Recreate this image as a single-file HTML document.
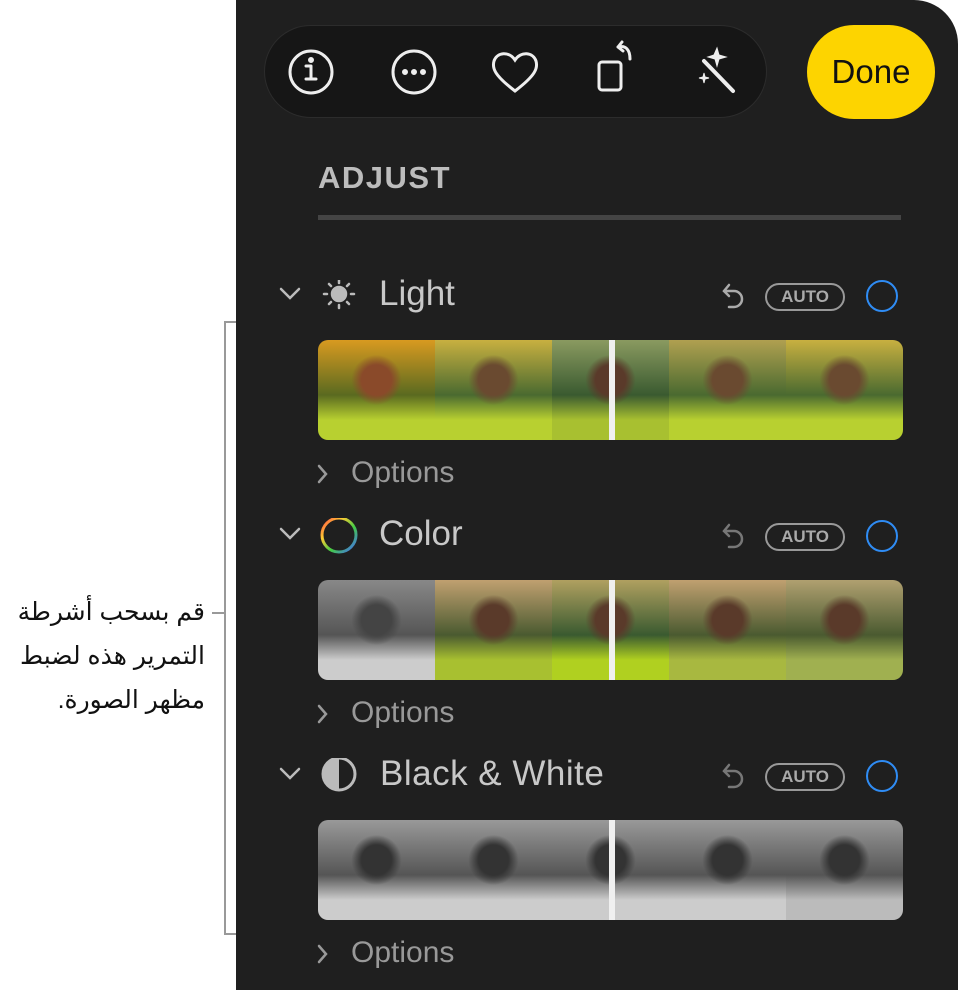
<!DOCTYPE html>
<html><head><meta charset="utf-8"><style>
body{margin:0;width:963px;height:990px;background:#fff;position:relative;overflow:hidden;font-family:"Liberation Sans",sans-serif}
.panel{position:absolute;left:236px;top:0;width:722px;height:990px;background:#1f1f1f;border-top-right-radius:44px}
.abs{position:absolute}
.bar{left:264px;top:25px;width:503px;height:93px;border-radius:47px;background:#161616;border:1px solid #2c2c2c;box-sizing:border-box}
.done{left:807px;top:25px;width:128px;height:94px;border-radius:47px;background:#fdd400;color:#111;font-size:33px;text-align:center;line-height:94px}
.adj{left:318px;top:160px;color:#bdbdbd;font-size:31px;font-weight:bold;letter-spacing:1.5px}
.rule{left:318px;top:215px;width:583px;height:5px;background:#444}
.title{color:#c8c8c8;font-size:35px}
.opt{color:#999;font-size:30px}
.auto{width:76px;height:24px;border:2px solid #999;border-radius:14px;color:#aaa;font-size:17px;font-weight:bold;text-align:center;line-height:24px}
.ring{width:32px;height:32px;border:2.5px solid #2f8cf4;border-radius:50%;box-sizing:border-box}
.strip{left:318px;width:585px;height:100px;border-radius:10px;overflow:hidden;display:flex}
.strip div{flex:1;position:relative}
.strip .sep{position:absolute;left:291px;top:0;width:6px;height:100px;background:#f0f0f0}
.ar{font-family:"Liberation Sans","Noto Sans CJK SC","DejaVu Sans",sans-serif;direction:rtl;text-align:right;font-size:25px;line-height:44px;color:#111;right:758px;top:590px;width:220px}
</style></head><body>
<div class="panel"></div>
<div class="abs bar"></div>
<svg class="abs" style="left:264px;top:25px" width="503" height="93" fill="none" stroke="#eee" stroke-width="3" stroke-linecap="round">
<circle cx="47" cy="47" r="21"/><path d="M47 41v13M42 54h10M42 41h5"/><circle cx="47" cy="35" r="1.5" fill="#eee"/>
<circle cx="150" cy="47" r="21"/><circle cx="141" cy="47" r="1.5" fill="#eee"/><circle cx="150" cy="47" r="1.5" fill="#eee"/><circle cx="159" cy="47" r="1.5" fill="#eee"/>
<path d="M251 66C230 50 228 43 230 36c3-9 15-10 21-1c6-9 18-8 21 1c2 7 0 14-21 30z"/>
<rect x="335" y="37" width="22" height="28" rx="3"/><path d="M354 22c8-2 12 3 12 12M354 22l4-5M354 22l5 4"/>
<path d="M440 36l29 30" stroke-width="4"/><path d="M450 30l3-7 2 7 7 2-7 2-2 7-2-7-7-2z" fill="#eee" stroke-width="1"/><path d="M439 52l1-4 1 4 4 1-4 1-1 4-1-4-4-1z" fill="#eee" stroke-width="1"/>
</svg>
<div class="abs done">Done</div>
<div class="abs adj">ADJUST</div>
<div class="abs rule"></div>

<!-- Light -->
<svg class="abs" style="left:278px;top:280px" width="80" height="34" fill="none" stroke="#bbb" stroke-width="2.5" stroke-linecap="round">
<path d="M3 9l9 9 9-9"/>
<circle cx="61" cy="14" r="7" fill="#bbb"/>
<path d="M61 0v3M61 25v3M46 14h3M73 14h3M51 4l2 2M69 22l2 2M51 24l2-2M69 6l2-2"/>
</svg>
<div class="abs title" style="left:379px;top:274px">Light</div>
<svg class="abs" style="left:720px;top:282px" width="28" height="30" fill="none" stroke="#aaa" stroke-width="2.5" stroke-linecap="round"><path d="M9 3L4 9l5 5M4 9h10a8 8 0 010 16h-5"/></svg>
<div class="abs auto" style="left:765px;top:283px">AUTO</div>
<div class="abs ring" style="left:866px;top:280px"></div>
<div class="abs strip" style="top:340px">
<div style="background:radial-gradient(circle at 50% 40%,#8a4a2a 18%,transparent 30%),linear-gradient(180deg,#d89a20,#5a6a20 55%,#b8d030 80%)"></div>
<div style="background:radial-gradient(circle at 50% 40%,#6a4a30 18%,transparent 30%),linear-gradient(180deg,#c8b040,#4a6a30 55%,#b8d030 80%)"></div>
<div style="background:radial-gradient(circle at 50% 40%,#5a3a2a 18%,transparent 30%),linear-gradient(180deg,#8a9a60,#3a5a30 55%,#a8c030 80%)"></div>
<div style="background:radial-gradient(circle at 50% 40%,#6a4a30 18%,transparent 30%),linear-gradient(180deg,#b0a050,#4a6a30 55%,#b8d030 80%)"></div>
<div style="background:radial-gradient(circle at 50% 40%,#6a4a30 18%,transparent 30%),linear-gradient(180deg,#c8b040,#4a6a30 55%,#b8d030 80%)"></div>
<span class="sep"></span></div>
<svg class="abs" style="left:316px;top:463px" width="14" height="22" fill="none" stroke="#999" stroke-width="2.5" stroke-linecap="round"><path d="M3 3l7 8-7 8"/></svg>
<div class="abs opt" style="left:351px;top:456px">Options</div>

<!-- Color -->
<svg class="abs" style="left:278px;top:518px" width="80" height="40" fill="none" stroke-width="3" stroke-linecap="round">
<path d="M3 11l9 9 9-9" stroke="#bbb" stroke-width="2.5"/>
<circle cx="61" cy="17" r="17" stroke="url(#g)"/>
<defs><linearGradient id="g" x1="0" y1="0" x2="1" y2="1"><stop offset="0" stop-color="#f44"/><stop offset=".3" stop-color="#fc3"/><stop offset=".6" stop-color="#4c4"/><stop offset="1" stop-color="#46f"/></linearGradient></defs>
</svg>
<div class="abs title" style="left:379px;top:514px">Color</div>
<svg class="abs" style="left:720px;top:522px" width="28" height="30" fill="none" stroke="#777" stroke-width="2.5" stroke-linecap="round"><path d="M9 3L4 9l5 5M4 9h10a8 8 0 010 16h-5"/></svg>
<div class="abs auto" style="left:765px;top:523px">AUTO</div>
<div class="abs ring" style="left:866px;top:520px"></div>
<div class="abs strip" style="top:580px">
<div style="background:radial-gradient(circle at 50% 40%,#444 18%,transparent 30%),linear-gradient(180deg,#888,#555 55%,#ccc 80%)"></div>
<div style="background:radial-gradient(circle at 50% 40%,#5a3a2a 18%,transparent 30%),linear-gradient(180deg,#c0a070,#4a5a30 55%,#a8c030 80%)"></div>
<div style="background:radial-gradient(circle at 50% 40%,#5a3a2a 18%,transparent 30%),linear-gradient(180deg,#b0a060,#3a5a30 55%,#b0d020 80%)"></div>
<div style="background:radial-gradient(circle at 50% 40%,#5a3a2a 18%,transparent 30%),linear-gradient(180deg,#c0a070,#4a5a30 55%,#a8b840 80%)"></div>
<div style="background:radial-gradient(circle at 50% 40%,#5a3a2a 18%,transparent 30%),linear-gradient(180deg,#b0a070,#4a5a30 55%,#a0b050 80%)"></div>
<span class="sep"></span></div>
<svg class="abs" style="left:316px;top:703px" width="14" height="22" fill="none" stroke="#999" stroke-width="2.5" stroke-linecap="round"><path d="M3 3l7 8-7 8"/></svg>
<div class="abs opt" style="left:351px;top:696px">Options</div>

<!-- B&W -->
<svg class="abs" style="left:278px;top:758px" width="80" height="40" fill="none" stroke-linecap="round">
<path d="M3 11l9 9 9-9" stroke="#bbb" stroke-width="2.5"/>
<circle cx="61" cy="16" r="16" stroke="#bbb" stroke-width="3"/><path d="M61 0a16 16 0 000 32z" fill="#bbb"/>
</svg>
<div class="abs title" style="left:380px;top:754px;letter-spacing:0.5px">Black &amp; White</div>
<svg class="abs" style="left:720px;top:762px" width="28" height="30" fill="none" stroke="#777" stroke-width="2.5" stroke-linecap="round"><path d="M9 3L4 9l5 5M4 9h10a8 8 0 010 16h-5"/></svg>
<div class="abs auto" style="left:765px;top:763px">AUTO</div>
<div class="abs ring" style="left:866px;top:760px"></div>
<div class="abs strip" style="top:820px">
<div style="background:radial-gradient(circle at 50% 40%,#333 18%,transparent 30%),linear-gradient(180deg,#999,#555 55%,#ccc 80%)"></div>
<div style="background:radial-gradient(circle at 50% 40%,#333 18%,transparent 30%),linear-gradient(180deg,#999,#555 55%,#ccc 80%)"></div>
<div style="background:radial-gradient(circle at 50% 40%,#333 18%,transparent 30%),linear-gradient(180deg,#999,#555 55%,#ccc 80%)"></div>
<div style="background:radial-gradient(circle at 50% 40%,#333 18%,transparent 30%),linear-gradient(180deg,#999,#555 55%,#ccc 80%)"></div>
<div style="background:radial-gradient(circle at 50% 40%,#333 18%,transparent 30%),linear-gradient(180deg,#999,#555 55%,#bbb 80%)"></div>
<span class="sep"></span></div>
<svg class="abs" style="left:316px;top:943px" width="14" height="22" fill="none" stroke="#999" stroke-width="2.5" stroke-linecap="round"><path d="M3 3l7 8-7 8"/></svg>
<div class="abs opt" style="left:351px;top:936px">Options</div>

<!-- callout -->
<div class="abs" style="left:224px;top:321px;width:12px;height:614px;border:2px solid #999;border-right:none;box-sizing:border-box"></div>
<div class="abs" style="left:212px;top:612px;width:12px;height:2px;background:#999"></div>
<div class="abs ar">قم بسحب أشرطة التمرير هذه لضبط مظهر الصورة.</div>
</body></html>
